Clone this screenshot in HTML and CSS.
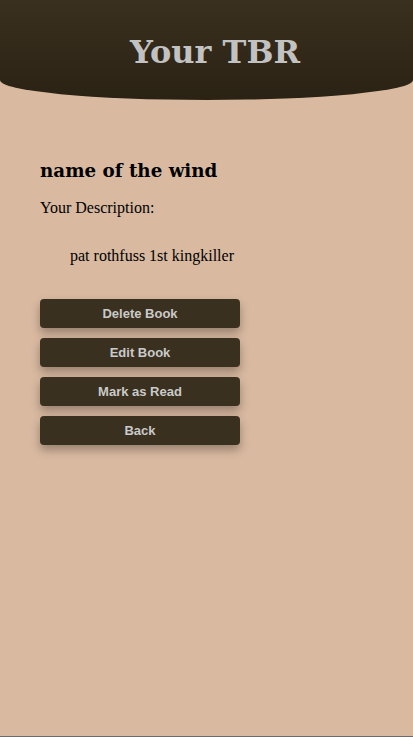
FILE: index.html
```html
<!DOCTYPE html>
<html>
<head>
<meta charset="utf-8">
<link rel="stylesheet" href="styles.css">
</head>
<body>
<header class="top">
  <h1 class="title">Your TBR</h1>
</header>
<main class="content">
  <h2 class="book-name">name of the wind</h2>
  <p class="label">Your Description:</p>
  <p class="desc">pat rothfuss 1st kingkiller</p>
  <div class="actions">
    <button class="btn">Delete Book</button>
    <button class="btn">Edit Book</button>
    <button class="btn">Mark as Read</button>
    <button class="btn">Back</button>
  </div>
</main>
</body>
</html>
```
FILE: styles.css
```css
* { box-sizing: border-box; }
html, body { margin: 0; padding: 0; }
body {
  background: #d9b9a0;
  min-height: 737px;
  border-bottom: 1px solid #6b6b6b;
  font-family: "Liberation Serif", serif;
  color: #000;
}
.top {
  height: 100px;
  background: linear-gradient(180deg, #3a301f 0%, #2a2214 100%);
  border-bottom-left-radius: 50% 20px;
  border-bottom-right-radius: 50% 20px;
  display: flex;
  justify-content: center;
  padding-top: 32px;
  padding-left: 17px;
}
.title {
  margin: 0;
  font-family: "DejaVu Serif", serif;
  font-weight: bold;
  font-size: 32px;
  line-height: 40px;
  color: #c2c2c2;
}
.content {
  padding: 56px 40px 0;
}
.book-name {
  margin: 0;
  font-family: "DejaVu Serif", serif;
  font-size: 18.3px;
  line-height: 30px;
  font-weight: bold;
}
.label {
  margin: 12px 0 0;
  font-size: 16px;
  line-height: 20px;
}
.desc {
  margin: 28px 0 0 30px;
  font-size: 16px;
  line-height: 20px;
}
.actions {
  margin-top: 33px;
  display: flex;
  flex-direction: column;
  gap: 10px;
  width: 200px;
}
.btn {
  height: 29px;
  border: none;
  border-radius: 4px;
  background: #3a301f;
  color: #cacaca;
  font-family: "Liberation Sans", Arial, sans-serif;
  font-weight: bold;
  font-size: 13px;
  box-shadow: 0 5px 10px rgba(0,0,0,0.3);
  padding: 0;
}
```
